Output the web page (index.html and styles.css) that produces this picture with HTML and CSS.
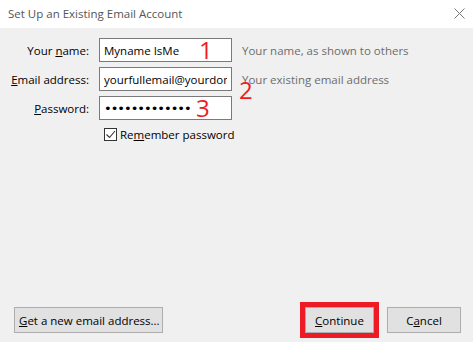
FILE: index.html
```html
<!DOCTYPE html>
<html lang="en">
<head>
    <meta charset="UTF-8">
    <title>Set Up an Existing Email Account</title>
    <link rel="stylesheet" href="styles.css">
</head>
<body>
    <div class="dialog">
        <div class="titlebar">
            <span class="title">Set Up an Existing Email Account</span>
            <svg class="close" width="11" height="11" viewBox="0 0 11 11">
                <path d="M0.5 0.5 L10.5 10.5 M10.5 0.5 L0.5 10.5" stroke="#777" stroke-width="1" fill="none"/>
            </svg>
        </div>

        <div class="content">
            <div class="form">
                <label class="label">Your <u>n</u>ame:</label>
                <div class="field">
                    <input class="input" type="text" value="Myname IsMe">
                    <span class="mark mark-1">1</span>
                </div>
                <span class="hint">Your name, as shown to others</span>

                <label class="label"><u>E</u>mail address:</label>
                <div class="field">
                    <input class="input" type="text" value="yourfullemail@yourdomain.com">
                    <span class="mark mark-2">2</span>
                </div>
                <span class="hint">Your existing email address</span>

                <label class="label"><u>P</u>assword:</label>
                <div class="field">
                    <input class="input" type="password" value="mypassword123">
                    <span class="mark mark-3">3</span>
                </div>
                <span></span>

                <span></span>
                <label class="remember">
                    <span class="checkbox">
                        <svg width="11" height="11" viewBox="0 0 11 11">
                            <path d="M1.5 5.5 L4.5 8.5 L10 2" stroke="#333" stroke-width="1.1" fill="none"/>
                        </svg>
                    </span>
                    <span class="remember-text">Re<u>m</u>ember password</span>
                </label>
                <span></span>
            </div>

            <div class="buttons">
                <button class="btn btn-new"><u>G</u>et a new email address...</button>
                <div class="right">
                    <div class="highlight">
                        <button class="btn btn-continue"><u>C</u>ontinue</button>
                    </div>
                    <button class="btn btn-cancel">C<u>a</u>ncel</button>
                </div>
            </div>
        </div>
    </div>
</body>
</html>
```

FILE: styles.css
```css
* {
    margin: 0;
    padding: 0;
    box-sizing: border-box;
}
body {
    width: 473px;
    height: 342px;
    overflow: hidden;
    font-family: "Open Sans", "Noto Sans", sans-serif;
    font-size: 11.5px;
    color: #000;
}
.dialog {
    width: 473px;
    height: 342px;
    display: flex;
    flex-direction: column;
    background: #f0f0f0;
}
.titlebar {
    height: 28px;
    background: #fff;
    display: flex;
    align-items: center;
    justify-content: space-between;
    padding: 0 8px 2px 8px;
}
.title {
    color: #555;
}
.content {
    flex: 1;
    display: flex;
    flex-direction: column;
    justify-content: space-between;
    padding: 10px 0 4px 0;
}
/* formulier */
.form {
    display: grid;
    grid-template-columns: 89px 133px 1fr;
    column-gap: 10px;
    row-gap: 5px;
    align-items: center;
}
.label {
    text-align: right;
    white-space: nowrap;
}
.field {
    position: relative;
    height: 24px;
}
.input {
    width: 133px;
    height: 24px;
    border: 1px solid #7a7a7a;
    background: #fff;
    padding: 0 4px;
    font-family: inherit;
    font-size: 11.5px;
    color: #000;
    outline: none;
}
.input[type="password"] {
    font-family: "DejaVu Sans", sans-serif;
    font-size: 13px;
    letter-spacing: -1px;
}
.hint {
    color: #6d6d6d;
    white-space: nowrap;
}
.mark {
    position: absolute;
    color: #ee1c25;
    font-family: "Open Sans", sans-serif;
    font-size: 24px;
    line-height: 24px;
}
.mark-1 {
    left: 100px;
    top: 0;
}
.mark-2 {
    left: 140px;
    top: 11px;
}
.mark-3 {
    left: 97px;
    top: 0;
}
.remember {
    display: flex;
    align-items: center;
    gap: 3px;
    padding-left: 5px;
    margin-top: 2px;
    white-space: nowrap;
}
.checkbox {
    width: 13px;
    height: 13px;
    border: 1px solid #333;
    background: #fff;
    display: flex;
    align-items: center;
    justify-content: center;
}
/* knoppen onderaan */
.buttons {
    display: flex;
    justify-content: space-between;
    align-items: center;
    padding: 0 12px 0 14px;
}
.right {
    display: flex;
    align-items: center;
    gap: 8px;
}
.btn {
    height: 26px;
    border: 1px solid #adadad;
    background: #e1e1e1;
    font-family: inherit;
    font-size: 11.5px;
    color: #000;
    padding: 0 4px;
    white-space: nowrap;
}
.btn-new {
    width: 149px;
}
.highlight {
    border: 5px solid #ed1c24;
}
.btn-continue {
    width: 69px;
}
.btn-cancel {
    width: 74px;
}
```
